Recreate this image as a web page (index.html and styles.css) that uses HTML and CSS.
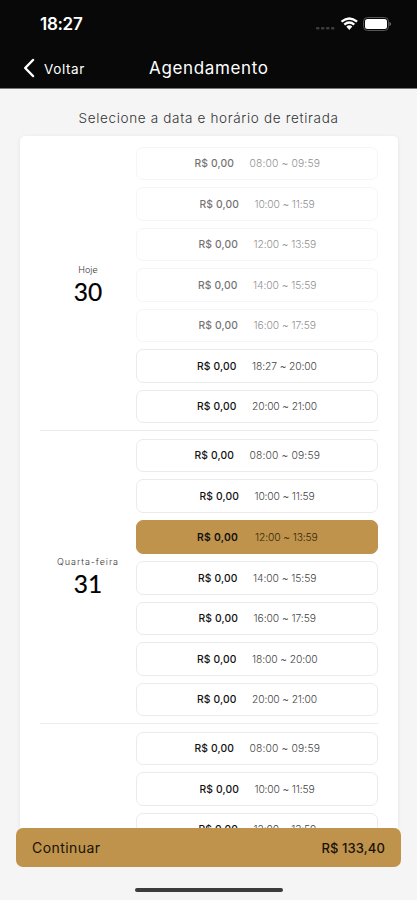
FILE: index.html
```
<!DOCTYPE html>
<html lang="pt-BR">
<head>
<meta charset="utf-8">
<title>Agendamento</title>
<link rel="stylesheet" href="styles.css">
</head>
<body>
<div class="screen">
  <header class="header">
    <div class="status">
      <span class="clock">18:27</span>
      <svg class="status-icons" width="78" height="18" viewBox="0 0 78 18">
        <g fill="#3d3d3d"><rect x="3" y="12" width="3.500" height="2.500" rx="1"/><rect x="8" y="12" width="3.500" height="2.500" rx="1"/><rect x="13" y="12" width="3.500" height="2.500" rx="1"/><rect x="18" y="12" width="3.500" height="2.500" rx="1"/></g>
        <g fill="none" stroke="#fff" stroke-width="2.300"><path d="M28.500 6.700Q36.300 .3 44.100 6.700"/><path d="M31.300 9.700Q36.300 5.400 41.300 9.700"/></g>
        <path d="M33.300 11.600Q36.300 9 39.300 11.600L36.300 15Z" fill="#fff"/>
        <rect x="50.500" y="2.500" width="25" height="13" rx="4" fill="none" stroke="#555"/>
        <rect x="52" y="4" width="22" height="10" rx="2.500" fill="#fff"/>
        <path d="M76.500 7v4q1.500-.6 1.500-2t-1.500-2Z" fill="#777"/>
      </svg>
    </div>
    <nav class="nav">
      <svg class="back-icon" width="13" height="20" viewBox="0 0 13 20"><path d="M10 2L2.200 10L10 18" fill="none" stroke="#fff" stroke-width="2.500" stroke-linecap="round" stroke-linejoin="round"/></svg>
      <span class="back">Voltar</span>
      <h1 class="title">Agendamento</h1>
    </nav>
  </header>
  <p class="prompt">Selecione a data e horário de retirada</p>
  <main class="card">
    <section class="day">
      <div class="date"><span class="weekday">Hoje</span><span class="number">30</span></div>
      <div class="slots">
        <div class="slot disabled t08"><b>R$ 0,00</b><span>08:00 ~ 09:59</span></div>
        <div class="slot disabled t10"><b>R$ 0,00</b><span>10:00 ~ 11:59</span></div>
        <div class="slot disabled t12"><b>R$ 0,00</b><span>12:00 ~ 13:59</span></div>
        <div class="slot disabled t14"><b>R$ 0,00</b><span>14:00 ~ 15:59</span></div>
        <div class="slot disabled t16"><b>R$ 0,00</b><span>16:00 ~ 17:59</span></div>
        <div class="slot t18"><b>R$ 0,00</b><span>18:27 ~ 20:00</span></div>
        <div class="slot t20"><b>R$ 0,00</b><span>20:00 ~ 21:00</span></div>
      </div>
    </section>
    <section class="day">
      <div class="date"><span class="weekday wide">Quarta-feira</span><span class="number">31</span></div>
      <div class="slots">
        <div class="slot t08"><b>R$ 0,00</b><span>08:00 ~ 09:59</span></div>
        <div class="slot t10"><b>R$ 0,00</b><span>10:00 ~ 11:59</span></div>
        <div class="slot selected t12"><b>R$ 0,00</b><span>12:00 ~ 13:59</span></div>
        <div class="slot t14"><b>R$ 0,00</b><span>14:00 ~ 15:59</span></div>
        <div class="slot t16"><b>R$ 0,00</b><span>16:00 ~ 17:59</span></div>
        <div class="slot t18"><b>R$ 0,00</b><span>18:00 ~ 20:00</span></div>
        <div class="slot t20"><b>R$ 0,00</b><span>20:00 ~ 21:00</span></div>
      </div>
    </section>
    <section class="day">
      <div class="date"></div>
      <div class="slots">
        <div class="slot t08"><b>R$ 0,00</b><span>08:00 ~ 09:59</span></div>
        <div class="slot t10"><b>R$ 0,00</b><span>10:00 ~ 11:59</span></div>
        <div class="slot t12"><b>R$ 0,00</b><span>12:00 ~ 13:59</span></div>
      </div>
    </section>
  </main>
  <footer class="footer">
    <div class="continue"><span class="label">Continuar</span><span class="total">R$ 133,40</span></div>
    <div class="home"></div>
  </footer>
</div>
</body>
</html>
```
FILE: styles.css
```
* { box-sizing: border-box; }
body { margin: 0; background: #f5f5f5; font-family: Inter, "Liberation Sans", sans-serif; }
.screen { height: 900px; display: flex; flex-direction: column; overflow: hidden; }
.header { flex: none; height: 89px; background: #080808; color: #fff; border-bottom: 1px solid #777; }
.status { display: flex; justify-content: space-between; height: 48px; padding: 15px 26px 0 40px; }
.clock { font-size: 17px; line-height: 19px; font-weight: 600; letter-spacing: -0.3px; }
.nav { display: grid; grid-template-columns: 21px 105px 1fr; align-items: center; height: 40px; padding-left: 23px; }
.back { font-size: 13.5px; letter-spacing: 0.6px; padding-top: 2px; }
.title { margin: 0; font-size: 17px; font-weight: 400; letter-spacing: 0.65px; white-space: nowrap; }
.prompt { flex: none; margin: 0; height: 47px; padding-top: 20px; text-align: center; font-size: 13.5px; line-height: 18px; font-weight: 300; color: #333; letter-spacing: 0.67px; white-space: nowrap; }
.card { flex: 1; min-height: 0; overflow: hidden; margin: 0 19px 0 20px; padding: 2.5px 20px 0; background: #fff; border-radius: 5px 5px 0 0; box-shadow: 0 1px 4px rgba(0,0,0,.08); }
.day { display: grid; grid-template-columns: 96px 1fr; padding: 8px 0 7px; }
.day + .day { padding-top: 7.5px; border-top: 1px solid #ececec; }
.date { display: flex; flex-direction: column; align-items: center; justify-content: center; padding-top: 3px; }
.weekday { font-size: 9px; line-height: 11px; font-weight: 300; color: #333; }
.wide { letter-spacing: 0.95px; }
.number { font: 400 24.5px/34px Lato, sans-serif; color: #000; -webkit-text-stroke: 0.2px #000; }
.slots { display: flex; flex-direction: column; gap: 7px; }
.slot { display: flex; align-items: center; justify-content: center; gap: 16px; height: 33.5px; border: 1px solid #ebebeb; border-radius: 7px; font-size: 10.3px; white-space: nowrap; color: #111; }
.slot b { font-weight: 500; width: 39px; letter-spacing: 0.15px; }
.slot span { font-weight: 300; color: #444; }
.disabled { border-color: #f5f5f5; }
.disabled b, .disabled span { opacity: .6; }
.selected { height: 34.5px; background: #bf934b; border-color: #bf934b; }
.selected b { font-weight: 600; width: 42px; letter-spacing: 0.3px; }
.slot.selected span { color: #33270f; }
.t08 span { width: 70px; letter-spacing: 0.15px; }
.t10 span { width: 60px; letter-spacing: -0.15px; }
.t12 span { width: 62px; letter-spacing: -0.1px; }
.t14 span { width: 63px; letter-spacing: -0.05px; }
.t16 span { width: 62px; letter-spacing: -0.05px; }
.t18 span { width: 65px; letter-spacing: -0.1px; }
.t20 span { width: 65px; letter-spacing: -0.15px; }
.footer { flex: none; height: 72px; padding: 0 16px; }
.continue { display: flex; align-items: center; justify-content: space-between; height: 39px; padding: 0 16px; border-radius: 7px; background: #bf934b; color: #17120a; font-size: 14px; }
.label { letter-spacing: 0.45px; }
.total { font-size: 13px; font-weight: 500; letter-spacing: 0.1px; }
.home { width: 148px; height: 4px; margin: 21px auto 0 119px; border-radius: 2px; background: #3c3c3c; }
```
